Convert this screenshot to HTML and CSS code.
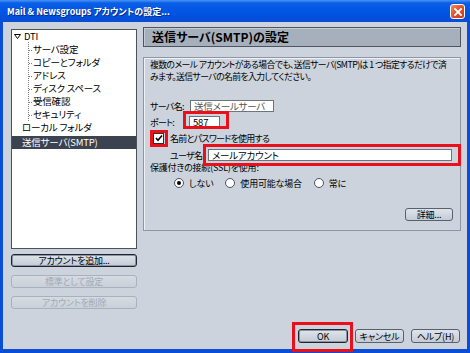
FILE: index.html
```html
<!DOCTYPE html>
<html lang="ja">
<head>
<meta charset="utf-8">
<link rel="stylesheet" href="styles.css">
</head>
<body>
<div class="window">
  <div class="titlebar">
    <span class="title">Mail &amp; Newsgroups アカウントの設定...</span>
    <span class="close"><svg width="8" height="8" viewBox="0 0 8 8"><path d="M1 1L7 7M7 1L1 7" stroke="#fff" stroke-width="1.8" stroke-linecap="square"/></svg></span>
  </div>
  <div class="body">
    <div class="main">
      <div class="left">
        <div class="tree">
          <div class="row root"><svg class="tri" width="7" height="5" viewBox="0 0 7 5"><path d="M0.5 0.5H6.5L3.5 4.5Z" fill="#fff" stroke="#000" stroke-width="1"/></svg>DTI</div>
          <div class="children">
            <div class="row child">サーバ設定</div>
            <div class="row child">コピーとフォルダ</div>
            <div class="row child">アドレス</div>
            <div class="row child">ディスク スペース</div>
            <div class="row child">受信確認</div>
            <div class="row child">セキュリティ</div>
          </div>
          <div class="row top">ローカル フォルダ</div>
          <div class="row top selected">送信サーバ(SMTP)</div>
        </div>
        <div class="btn wide default">アカウントを追加...</div>
        <div class="btn wide disabled">標準として設定</div>
        <div class="btn wide disabled">アカウントを削除</div>
      </div>
      <div class="right">
        <div class="header">送信サーバ(SMTP)の設定</div>
        <div class="panel">
          <p class="desc">複数のメール アカウントがある場合でも、送信サーバ(SMTP)は 1 つ指定するだけで済<br>みます。送信サーバの名前を入力してください。</p>
          <div class="field-row r-server"><span class="label">サーバ名:</span><span class="input server">送信メールサーバ</span></div>
          <div class="field-row r-port"><span class="label">ポート:</span><span class="input port">587</span></div>
          <div class="field-row r-check"><span class="checkbox"><svg width="8" height="8" viewBox="0 0 8 8"><path d="M1 4L3 6.2L7 1.5" fill="none" stroke="#000" stroke-width="1.6"/></svg></span><span class="check-label">名前とパスワードを使用する</span></div>
          <div class="field-row r-user"><span class="label">ユーザ名:</span><span class="input user">メールアカウント</span></div>
          <div class="ssl">保護付きの接続(SSL)を使用:</div>
          <div class="radios">
            <span class="radio-item"><span class="radio on"></span>しない</span>
            <span class="radio-item r2"><span class="radio"></span>使用可能な場合</span>
            <span class="radio-item r3"><span class="radio"></span>常に</span>
          </div>
          <div class="detail-row"><span class="btn detail">詳細...</span></div>
        </div>
      </div>
    </div>
    <div class="footer">
      <span class="btn foot ok">OK</span>
      <span class="btn foot">キャンセル</span>
      <span class="btn foot">ヘルプ(H)</span>
    </div>
  </div>
  <div class="mark mark-port"></div>
  <div class="mark mark-check"></div>
  <div class="mark mark-user"></div>
  <div class="mark mark-ok"></div>
</div>
</body>
</html>
```
FILE: styles.css
```css
* { box-sizing: border-box; }
html, body { margin: 0; padding: 0; }
body {
  width: 470px;
  height: 353px;
  overflow: hidden;
  font-family: "Noto Sans CJK JP", sans-serif;
  font-feature-settings: "palt";
  font-size: 9px;
  letter-spacing: -0.2px;
  color: #000;
}
.window {
  position: relative;
  width: 470px;
  height: 353px;
  background: #0a4ed6;
  display: flex;
  flex-direction: column;
}
.titlebar {
  height: 22px;
  flex: none;
  display: flex;
  align-items: center;
  justify-content: space-between;
  padding: 0 5px 0 7px;
  background: linear-gradient(#4a94f6 0, #0a5fe6 3px, #0356e6 45%, #0250dc 80%, #0a4cd2 100%);
}
.title {
  color: #fff;
  font-weight: bold;
  font-size: 9px;
  letter-spacing: 0;
  text-shadow: 1px 1px 0 #0a2a80;
}
.close {
  width: 15px;
  height: 15px;
  border: 1px solid #fff;
  border-radius: 3px;
  background: linear-gradient(135deg, #f08a60 0, #e0502a 50%, #c83c1c 100%);
  display: flex;
  align-items: center;
  justify-content: center;
  margin-top: 1px;
}
.body {
  flex: 1;
  margin: 0 3px 4px 3px;
  background: #ccd3dc;
  display: flex;
  flex-direction: column;
  justify-content: space-between;
  padding: 5px 6px 6px 8px;
}
.main {
  display: flex;
  gap: 6px;
}
.left {
  width: 126px;
  margin-top: 2px;
  display: flex;
  flex-direction: column;
}
.tree {
  height: 220px;
  background: #fff;
  border: 1px solid #4c525c;
  font-size: 9.5px;
}
.row {
  height: 13px;
  line-height: 13px;
  white-space: nowrap;
}
.root { padding-left: 2px; display: flex; align-items: center; }
.tri { margin-right: 3px; }
.children {
  position: relative;
  margin-left: 16px;
  border-left: 1px dotted #808080;
  height: 79px;
  margin-top: -1px;
  padding-top: 1px;
}
.children .row { position: relative; padding-left: 4px; }
.children .row::before {
  content: "";
  position: absolute;
  left: 0;
  top: 7px;
  width: 3px;
  border-top: 1px dotted #808080;
}
.top { padding-left: 10px; }
.selected {
  margin-top: 2px;
  background: #3b4250;
  color: #fff;
}
.btn {
  display: flex;
  align-items: center;
  justify-content: center;
  border: 1px solid #56606e;
  border-radius: 3px;
  background: linear-gradient(#dfe4ea, #c4cbd5);
  white-space: nowrap;
  font-size: 9px;
}
.wide { height: 13px; }
.left .default { margin-top: 5px; border-color: #1e2530; box-shadow: inset 0 0 0 1px #8a94a2; }
.left .disabled { margin-top: 8px; color: #a2aab6; border-color: #a9b1bd; background: linear-gradient(#d6dbe2, #c9d0d9); }
.right {
  width: 318px;
  display: flex;
  flex-direction: column;
}
.header {
  height: 20px;
  background: #a6b0bd;
  border: 1px solid #4e5560;
  box-shadow: inset 1px 1px 0 #c4ccd6;
  font-weight: bold;
  font-size: 12px;
  letter-spacing: 0;
  line-height: 18px;
  padding-left: 8px;
}
.panel {
  margin-top: 10px;
  height: 174px;
  border: 1px solid #8d96a2;
  box-shadow: inset 1px 1px 0 #eef1f5;
  padding: 1px 6px 0 6px;
  display: flex;
  flex-direction: column;
}
.desc {
  margin: 0;
  line-height: 12px;
  font-size: 8.8px;
  letter-spacing: -0.55px;
  white-space: nowrap;
}
.field-row {
  display: flex;
  align-items: center;
  white-space: nowrap;
}
.r-server { margin-top: 17px; height: 12px; }
.r-port { margin-top: 4px; height: 12px; }
.r-check { margin-top: 4px; height: 12px; }
.r-user { margin-top: 5px; height: 12px; padding-left: 20px; }
.label { flex: 0 0 40px; min-width: 0; letter-spacing: -0.7px; }
.r-port .label { flex-basis: 39px; }
.r-user .label { flex-basis: 38px; }
.check-label { letter-spacing: -0.75px; }
.input {
  flex: none;
  height: 12px;
  border: 1px solid #6c7480;
  background: #fff;
  line-height: 10px;
  padding-left: 3px;
  font-size: 9.5px;
}
.server { width: 84px; color: #555; }
.port { width: 31px; }
.user { width: 244px; }
.checkbox {
  flex: none;
  width: 11px;
  height: 11px;
  border: 1px solid #2a2f38;
  background: #fff;
  display: flex;
  align-items: center;
  justify-content: center;
  margin: 0 6px 0 3px;
}
.ssl { margin-top: 1px; height: 12px; line-height: 12px; }
.radios {
  margin-top: 3px;
  display: flex;
  padding-left: 24px;
  height: 12px;
  align-items: center;
}
.radio-item { display: flex; align-items: center; white-space: nowrap; }
.r2 { margin-left: 12px; }
.r3 { margin-left: 12px; }
.radio {
  width: 10px;
  height: 10px;
  border: 1px solid #4a5260;
  border-radius: 50%;
  background: #fff;
  margin-right: 5px;
  display: flex;
  align-items: center;
  justify-content: center;
}
.radio.on::after {
  content: "";
  width: 4px;
  height: 4px;
  border-radius: 50%;
  background: #000;
}
.detail-row {
  margin-top: 19px;
  display: flex;
  justify-content: flex-end;
  padding-right: 1px;
}
.detail { width: 48px; height: 13px; }
.footer {
  display: flex;
  justify-content: flex-end;
  gap: 7px;
  padding-right: 1px;
}
.foot { width: 49px; height: 14px; }
.ok { width: 50px; border-color: #1e2530; box-shadow: inset 0 0 0 1px #8a94a2; }
.mark {
  position: absolute;
  border: 3px solid #e8101a;
}
.mark-port { left: 183px; top: 111px; width: 46px; height: 18px; }
.mark-check { left: 150px; top: 130px; width: 18px; height: 17px; }
.mark-user { left: 203px; top: 144px; width: 258px; height: 22px; }
.mark-ok { left: 292px; top: 322px; width: 61px; height: 30px; }
```
